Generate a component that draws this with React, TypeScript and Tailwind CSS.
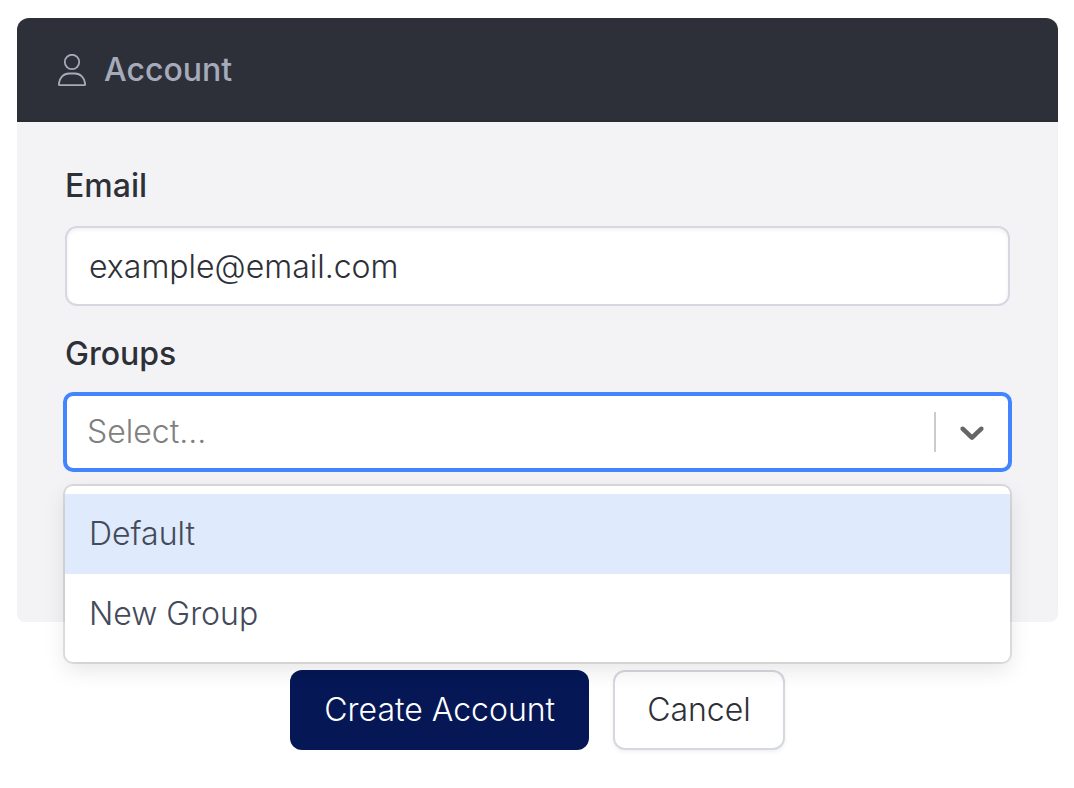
import { useState } from "react";

const groups = ["Default", "New Group"];

function UserIcon() {
  return (
    <svg
      className="h-8 w-7 shrink-0"
      viewBox="0 0 28 32"
      fill="none"
      stroke="currentColor"
      strokeWidth="1.8"
      strokeLinejoin="round"
      aria-hidden="true"
    >
      <circle cx="14" cy="8" r="7.2" />
      <path d="M1.4 31.1C.9 31.1.7 30.8.8 30.2 1.4 23.8 5.6 19.5 11 19.5h6c5.400 0 9.600 4.300 10.200 10.700.1.600-.1.900-.6.900Z" />
    </svg>
  );
}

function ChevronIcon() {
  return (
    <svg className="h-10 w-10 fill-[#666666]" viewBox="0 0 20 20" aria-hidden="true">
      <path d="M4.516 7.548c0.436-0.446 1.043-0.481 1.576 0l3.908 3.747 3.908-3.747c0.533-0.481 1.141-0.446 1.574 0 0.436 0.445 0.408 1.197 0 1.615-0.406 0.418-4.695 4.502-4.695 4.502-0.217 0.223-0.502 0.335-0.787 0.335s-0.570-0.112-0.789-0.335c0 0-4.287-4.084-4.695-4.502s-0.436-1.170 0-1.615z" />
    </svg>
  );
}

function GroupSelect() {
  const [open, setOpen] = useState(true);
  const [value, setValue] = useState("");

  const choose = (group: string) => {
    setValue(group);
    setOpen(false);
  };

  return (
    <div className="relative">
      <div className="relative rounded-lg border-2 border-[#4285ff] bg-white ring-2 ring-[#4285ff]">
        <select
          id="groups"
          value={value}
          onChange={(e) => choose(e.target.value)}
          onMouseDown={(e) => {
            e.preventDefault();
            setOpen(!open);
          }}
          className="block h-18 w-full appearance-none bg-transparent pr-24 pl-5 text-[32px] font-light text-[#808080] outline-none"
        >
          <option value="">Select...</option>
          {groups.map((group) => (
            <option key={group}>{group}</option>
          ))}
        </select>
        <div className="pointer-events-none absolute inset-y-0 right-0 flex items-center gap-4 pr-4">
          <span className="h-10 w-0.5 bg-[#cccccc]" />
          <ChevronIcon />
        </div>
      </div>
      {open && (
        <ul
          aria-label="Groups"
          className="absolute inset-x-0 top-full z-10 mt-4 rounded-lg bg-white py-2 shadow-[0_0_0_2px_rgba(0,0,0,0.1),0_8px_22px_rgba(0,0,0,0.1)]"
        >
          {groups.map((group, i) => (
            <li key={group}>
              <button
                type="button"
                onClick={() => choose(group)}
                className={
                  i === 0
                    ? "block h-20 w-full bg-[#dfeafc] px-6 text-left text-[32px] font-light text-[#434a59]"
                    : "block h-20 w-full px-6 text-left text-[32px] font-light text-[#434a59] hover:bg-[#dfeafc]"
                }
              >
                {group}
              </button>
            </li>
          ))}
        </ul>
      )}
    </div>
  );
}

export default function App() {
  return (
    <main className="min-h-screen bg-white pt-[18px] pr-4 pb-9 pl-[17px] font-['Inter','Liberation_Sans',sans-serif] text-[#2e3038]">
      <form onSubmit={(e) => e.preventDefault()}>
        <section className="rounded-t-xl rounded-b-lg bg-[#f3f3f5]">
          <header className="flex h-26 items-center gap-[18px] rounded-t-xl bg-[#2e3039] px-[41px] text-[#a5abba] shadow-[inset_0_-2px_0_#292b33]">
            <UserIcon />
            <h1 className="text-[32px] leading-[48px] font-medium">Account</h1>
          </header>
          <div className="px-12 pt-10 pb-38">
            <label htmlFor="email" className="mb-4 block text-[32px] leading-[48px] font-medium">
              Email
            </label>
            <input
              id="email"
              type="email"
              defaultValue="example@email.com"
              className="mb-6 block h-20 w-full rounded-xl border-2 border-[#d5d8e0] bg-white px-[22px] text-[32px] font-light shadow-[inset_0_2px_4px_rgba(0,0,0,0.06)] outline-none"
            />
            <label htmlFor="groups" className="mb-4 block text-[32px] leading-[48px] font-medium">
              Groups
            </label>
            <GroupSelect />
          </div>
        </section>
        <div className="mt-12 flex justify-center gap-6">
          <button type="submit" className="h-20 rounded-xl bg-[#051755] px-[34px] text-[32px] font-light text-white">
            Create Account
          </button>
          <button
            type="button"
            className="h-20 rounded-xl border-2 border-[#d5d8e0] bg-white px-8 text-[32px] font-light shadow-[0_2px_4px_rgba(0,0,0,0.06)]"
          >
            Cancel
          </button>
        </div>
      </form>
    </main>
  );
}
